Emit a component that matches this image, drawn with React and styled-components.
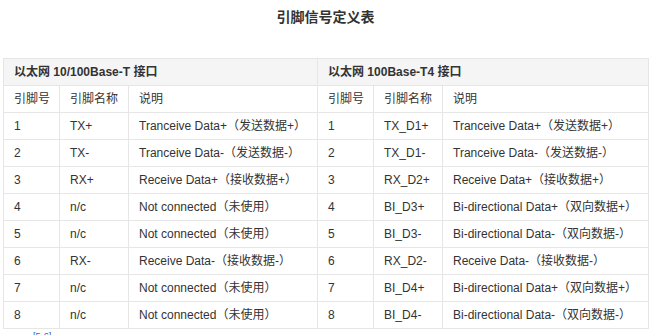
import React from "react";
import styled, { createGlobalStyle } from "styled-components";

const GlobalStyle = createGlobalStyle`
  body {
    margin: 0;
    background: #ffffff;
    font-family: "Liberation Sans", Arial, "Noto Sans CJK SC", sans-serif;
    color: #333333;
  }
`;

const Page = styled.div`
  width: 645px;
  padding: 0 18px 0 3px;
`;

const Title = styled.h3`
  margin: 0;
  padding-top: 10px;
  height: 48px;
  font-size: 14px;
  line-height: 14px;
  font-weight: bold;
  text-align: center;
  color: #333333;
`;

const Table = styled.table`
  width: 645px;
  border-collapse: collapse;
  table-layout: fixed;
  border: 1px solid #e6e6e6;
  font-size: 12px;
`;

const Cell = styled.td`
  height: 16px;
  padding: 5px 0 5px 10px;
  line-height: 16px;
  border: 1px solid #e6e6e6;
  white-space: nowrap;
  overflow: hidden;
  color: #333333;
`;

const GroupCell = styled(Cell)`
  font-weight: bold;
  background: #f5f5f5;
`;

const Note = styled.div`
  padding-left: 30px;
  padding-top: 1px;
  font-size: 11px;
  line-height: 12px;
  color: #3366cc;
`;

const widths = [56, 69, 189, 56, 69, 206];

const left = [
  ["1", "TX+", "Tranceive Data+（发送数据+）"],
  ["2", "TX-", "Tranceive Data-（发送数据-）"],
  ["3", "RX+", "Receive Data+（接收数据+）"],
  ["4", "n/c", "Not connected（未使用）"],
  ["5", "n/c", "Not connected（未使用）"],
  ["6", "RX-", "Receive Data-（接收数据-）"],
  ["7", "n/c", "Not connected（未使用）"],
  ["8", "n/c", "Not connected（未使用）"],
];

const right = [
  ["1", "TX_D1+", "Tranceive Data+（发送数据+）"],
  ["2", "TX_D1-", "Tranceive Data-（发送数据-）"],
  ["3", "RX_D2+", "Receive Data+（接收数据+）"],
  ["4", "BI_D3+", "Bi-directional Data+（双向数据+）"],
  ["5", "BI_D3-", "Bi-directional Data-（双向数据-）"],
  ["6", "RX_D2-", "Receive Data-（接收数据-）"],
  ["7", "BI_D4+", "Bi-directional Data+（双向数据+）"],
  ["8", "BI_D4-", "Bi-directional Data-（双向数据-）"],
];

const heads = ["引脚号", "引脚名称", "说明"];

export default function App() {
  return (
    <>
      <GlobalStyle />
      <Page>
        <Title>引脚信号定义表</Title>
        <Table>
          <colgroup>
            {widths.map((w, i) => (
              <col key={i} style={{ width: w }} />
            ))}
          </colgroup>
          <tbody>
            <tr>
              <GroupCell colSpan={3}>以太网 10/100Base-T 接口</GroupCell>
              <GroupCell colSpan={3}>以太网 100Base-T4 接口</GroupCell>
            </tr>
            <tr>
              {[...heads, ...heads].map((h, i) => (
                <Cell key={i}>{h}</Cell>
              ))}
            </tr>
            {left.map((row, i) => (
              <tr key={i}>
                {[...row, ...right[i]].map((c, j) => (
                  <Cell key={j}>{c}</Cell>
                ))}
              </tr>
            ))}
          </tbody>
        </Table>
        <Note>
          <sup>[5-6]</sup>
        </Note>
      </Page>
    </>
  );
}
